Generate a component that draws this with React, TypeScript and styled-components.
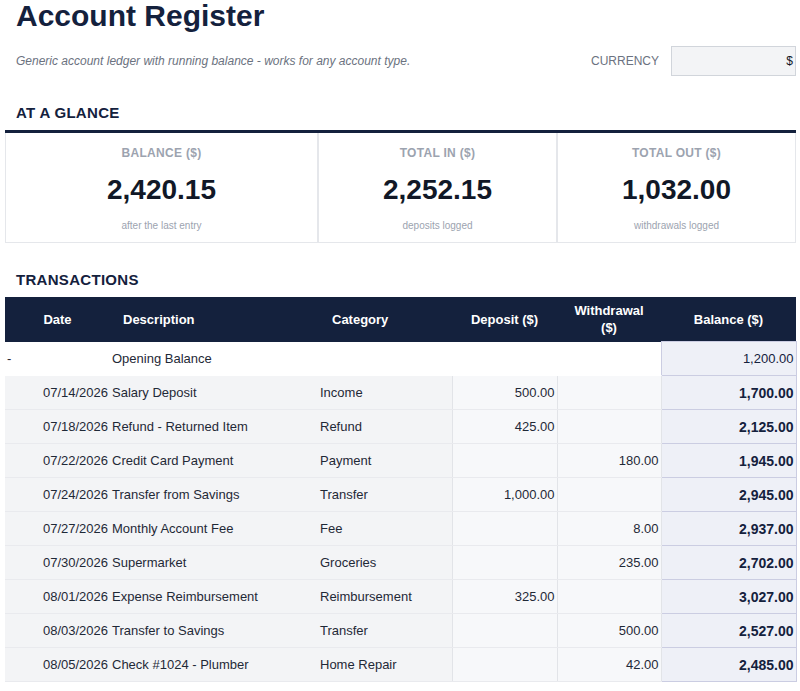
import styled, { createGlobalStyle } from 'styled-components';

const Global = createGlobalStyle`
    body { margin: 0; background: #fff; font-family: "Liberation Sans", Arial, sans-serif; color: #1f2937; }
`;

const Page = styled.div`
    padding: 0 4px 0 5px;
`;

const Title = styled.h1`
    margin: 0;
    padding: 0 0 0 11px;
    font-size: 30px;
    line-height: 32px;
    font-weight: 700;
    color: #14213d;
`;

const IntroRow = styled.div`
    display: flex;
    align-items: center;
    justify-content: space-between;
    margin-top: 14px;
    padding-left: 11px;
`;

const Intro = styled.p`
    margin: 0;
    font-size: 12px;
    font-style: italic;
    color: #6b7280;
`;

const Currency = styled.div`
    display: flex;
    align-items: center;
    gap: 12px;
    font-size: 12px;
    color: #6b7280;
`;

const CurrencyBox = styled.div`
    width: 125px;
    height: 30px;
    box-sizing: border-box;
    background: #f3f4f6;
    border: 1px solid #d1d5db;
    display: flex;
    align-items: center;
    justify-content: flex-end;
    padding-right: 2px;
    color: #111827;
`;

const Section = styled.h2`
    margin: ${p => (p.$top ?? 30)}px 0 8px;
    padding-left: 11px;
    font-size: 15px;
    line-height: 18px;
    font-weight: 700;
    letter-spacing: 0.3px;
    color: #14213d;
`;

const Cards = styled.div`
    display: grid;
    grid-template-columns: 313px 239px 239px;
    border-top: 3px solid #14213d;
`;

const Card = styled.div`
    height: 110px;
    box-sizing: border-box;
    border: 1px solid #e5e7eb;
    border-top: none;
    display: flex;
    flex-direction: column;
    align-items: center;
    padding-top: 13px;
`;

const CardLabel = styled.div`
    font-size: 12px;
    font-weight: 700;
    color: #9ca3af;
    letter-spacing: 0.3px;
`;

const CardValue = styled.div`
    margin-top: 14px;
    font-size: 28px;
    font-weight: 700;
    color: #111827;
`;

const CardNote = styled.div`
    margin-top: 14px;
    font-size: 10px;
    color: #9ca3af;
`;

const Table = styled.table`
    width: 791px;
    border-collapse: collapse;
    table-layout: fixed;
    font-size: 13px;
`;

const Th = styled.th<{ $align?: string; $pl?: number }>`
    background: #14213d;
    color: #fff;
    height: 44px;
    font-size: 13px;
    font-weight: 700;
    text-align: ${p => p.$align || 'center'};
    padding: 0 4px 0 ${p => p.$pl ?? 4}px;
    line-height: 17px;
`;

const Td = styled.td<{ $kind?: 'plain' | 'num' | 'bal'; $align?: string; $open?: boolean }>`
    height: 34px;
    padding: 0 2px;
    box-sizing: border-box;
    white-space: nowrap;
    text-align: ${p => p.$align || 'left'};
    color: #1f2937;
    background: ${p => (p.$open ? '#fff' : p.$kind === 'num' ? '#f7f8fa' : '#f3f4f6')};
    border-bottom: 1px solid ${p => (p.$open ? 'transparent' : '#e9eaee')};
    ${p => p.$kind === 'num' && !p.$open && 'border-left: 1px solid #e2e4e8; border-right: 1px solid #e2e4e8;'}
    ${p =>
        p.$kind === 'bal' &&
        `background: #eef0f7; border: 1px solid #cbcde2; color: #14213d; font-weight: ${p.$open ? 400 : 700}; font-size: ${p.$open ? 13 : 14}px;`}
`;

const rows = [
    ['07/14/2026', 'Salary Deposit', 'Income', '500.00', '', '1,700.00'],
    ['07/18/2026', 'Refund - Returned Item', 'Refund', '425.00', '', '2,125.00'],
    ['07/22/2026', 'Credit Card Payment', 'Payment', '', '180.00', '1,945.00'],
    ['07/24/2026', 'Transfer from Savings', 'Transfer', '1,000.00', '', '2,945.00'],
    ['07/27/2026', 'Monthly Account Fee', 'Fee', '', '8.00', '2,937.00'],
    ['07/30/2026', 'Supermarket', 'Groceries', '', '235.00', '2,702.00'],
    ['08/01/2026', 'Expense Reimbursement', 'Reimbursement', '325.00', '', '3,027.00'],
    ['08/03/2026', 'Transfer to Savings', 'Transfer', '', '500.00', '2,527.00'],
    ['08/05/2026', 'Check #1024 - Plumber', 'Home Repair', '', '42.00', '2,485.00'],
];

export default function App() {
    return (
        <>
            <Global />
            <Page>
                <Title>Account Register</Title>
                <IntroRow>
                    <Intro>Generic account ledger with running balance - works for any account type.</Intro>
                    <Currency>
                        CURRENCY
                        <CurrencyBox>$</CurrencyBox>
                    </Currency>
                </IntroRow>
                <Section $top={28}>AT A GLANCE</Section>
                <Cards>
                    <Card>
                        <CardLabel>BALANCE ($)</CardLabel>
                        <CardValue>2,420.15</CardValue>
                        <CardNote>after the last entry</CardNote>
                    </Card>
                    <Card>
                        <CardLabel>TOTAL IN ($)</CardLabel>
                        <CardValue>2,252.15</CardValue>
                        <CardNote>deposits logged</CardNote>
                    </Card>
                    <Card>
                        <CardLabel>TOTAL OUT ($)</CardLabel>
                        <CardValue>1,032.00</CardValue>
                        <CardNote>withdrawals logged</CardNote>
                    </Card>
                </Cards>
                <Section $top={28}>TRANSACTIONS</Section>
                <Table>
                    <colgroup>
                        <col style={{ width: 105 }} />
                        <col style={{ width: 208 }} />
                        <col style={{ width: 134 }} />
                        <col style={{ width: 105 }} />
                        <col style={{ width: 104 }} />
                        <col style={{ width: 135 }} />
                    </colgroup>
                    <thead>
                        <tr>
                            <Th>Date</Th>
                            <Th $align="left" $pl={13}>Description</Th>
                            <Th $align="left" $pl={14}>Category</Th>
                            <Th>Deposit ($)</Th>
                            <Th>Withdrawal<br />($)</Th>
                            <Th>Balance ($)</Th>
                        </tr>
                    </thead>
                    <tbody>
                        <tr>
                            <Td $open>-</Td>
                            <Td $open>Opening Balance</Td>
                            <Td $open />
                            <Td $open $kind="num" />
                            <Td $open $kind="num" />
                            <Td $open $kind="bal" $align="right">1,200.00</Td>
                        </tr>
                        {rows.map(r => (
                            <tr key={r[0]}>
                                <Td $align="right">{r[0]}</Td>
                                <Td>{r[1]}</Td>
                                <Td>{r[2]}</Td>
                                <Td $kind="num" $align="right">{r[3]}</Td>
                                <Td $kind="num" $align="right">{r[4]}</Td>
                                <Td $kind="bal" $align="right">{r[5]}</Td>
                            </tr>
                        ))}
                    </tbody>
                </Table>
            </Page>
        </>
    );
}
